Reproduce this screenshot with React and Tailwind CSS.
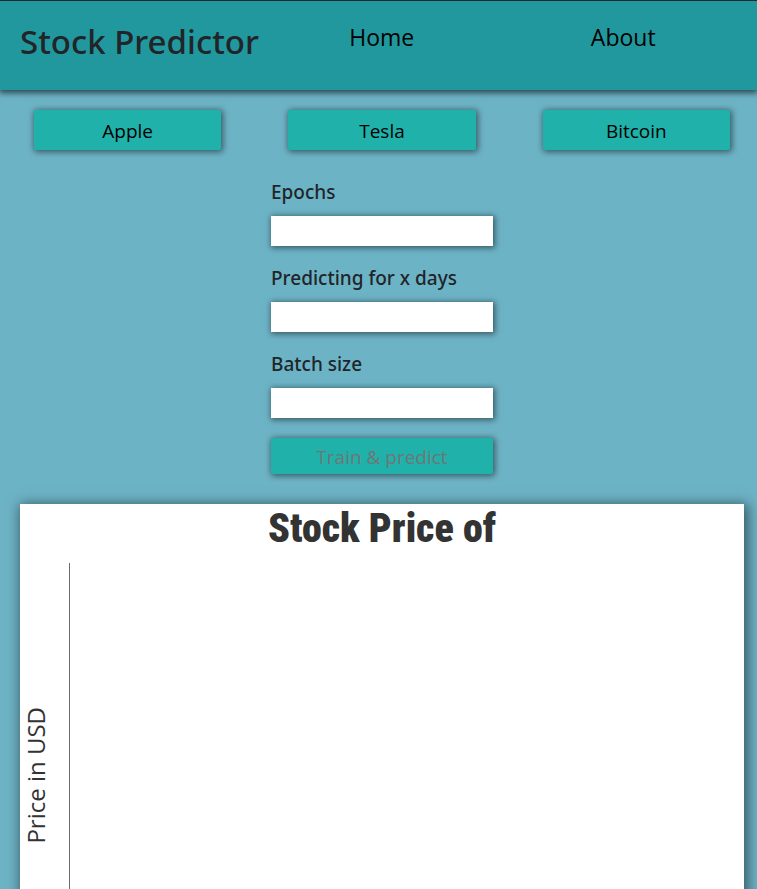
const stocks = ["Apple", "Tesla", "Bitcoin"];

const fields = [
  { id: "epochs", label: "Epochs" },
  { id: "days", label: "Predicting for x days" },
  { id: "batch", label: "Batch size" },
];

function Header() {
  return (
    <header className="flex h-[90px] shrink-0 items-start border-t border-[#22292c] bg-[#21989e] pr-[13px] pl-5 shadow-[0_2px_6px_1px_rgba(0,0,0,0.6)]">
      <h1 className="w-[241px] pt-[19px] font-['Noto_Sans','Open_Sans',sans-serif] text-[33px] leading-[44px] font-medium whitespace-nowrap text-[#212529]">
        Stock Predictor
      </h1>
      <nav className="grid flex-1 grid-cols-2 pt-[18px] text-center text-[23px] leading-[36px] text-black">
        <a href="#home">Home</a>
        <a href="#about">About</a>
      </nav>
    </header>
  );
}

function StockButtons() {
  return (
    <div className="grid grid-cols-3 gap-[67px] px-3.5">
      {stocks.map((name) => (
        <button
          key={name}
          type="button"
          className="h-10 rounded-[2px] bg-[#20b2aa] pt-0.5 text-[19px] leading-6 text-black shadow-[1px_1px_6px_1px_rgba(0,0,0,0.5)]"
        >
          {name}
        </button>
      ))}
    </div>
  );
}

function TrainForm() {
  return (
    <form className="mx-auto mt-7 flex w-[222px] flex-col gap-[18px]">
      {fields.map(({ id, label }) => (
        <div key={id} className="flex flex-col gap-[10px]">
          <label
            htmlFor={id}
            className="font-['Noto_Sans','Open_Sans',sans-serif] text-[19px] leading-[28px] font-medium whitespace-nowrap text-[#212529]"
          >
            {label}
          </label>
          <input
            id={id}
            type="text"
            className="h-[30px] w-full bg-white px-2 text-[19px] shadow-[1px_1px_6px_1px_rgba(0,0,0,0.5)] outline-none"
          />
        </div>
      ))}
      <button
        type="submit"
        disabled
        className="mt-0.5 h-9 rounded-[2px] bg-[#20b2aa] pt-0.5 text-[19px] leading-6 text-[#6d7675] shadow-[1px_1px_6px_1px_rgba(0,0,0,0.5)]"
      >
        Train &amp; predict
      </button>
    </form>
  );
}

function Chart() {
  return (
    <section className="mt-[30px] bg-white shadow-[2px_2px_12px_2px_rgba(0,0,0,0.5)]">
      <h2 className="h-[59px] pt-px text-center font-['Impact','Roboto_Condensed','Roboto',sans-serif] text-[40px] leading-[48px] font-black text-[#333333]">
        Stock Price of
      </h2>
      <div className="flex h-[424px]">
        <div className="flex w-[49px] items-center">
          <span className="rotate-180 text-[24px] leading-[32px] whitespace-nowrap text-[#333333] [writing-mode:vertical-rl]">
            Price in USD
          </span>
        </div>
        <div className="flex-1 border-l border-[#6e6e6e]" />
      </div>
    </section>
  );
}

export default function App() {
  return (
    <div className="flex h-screen flex-col overflow-hidden bg-[#6db3c6] font-['Open_Sans','Noto_Sans',sans-serif]">
      <Header />
      <main className="pt-5 pr-[13px] pl-5">
        <StockButtons />
        <TrainForm />
        <Chart />
      </main>
    </div>
  );
}
